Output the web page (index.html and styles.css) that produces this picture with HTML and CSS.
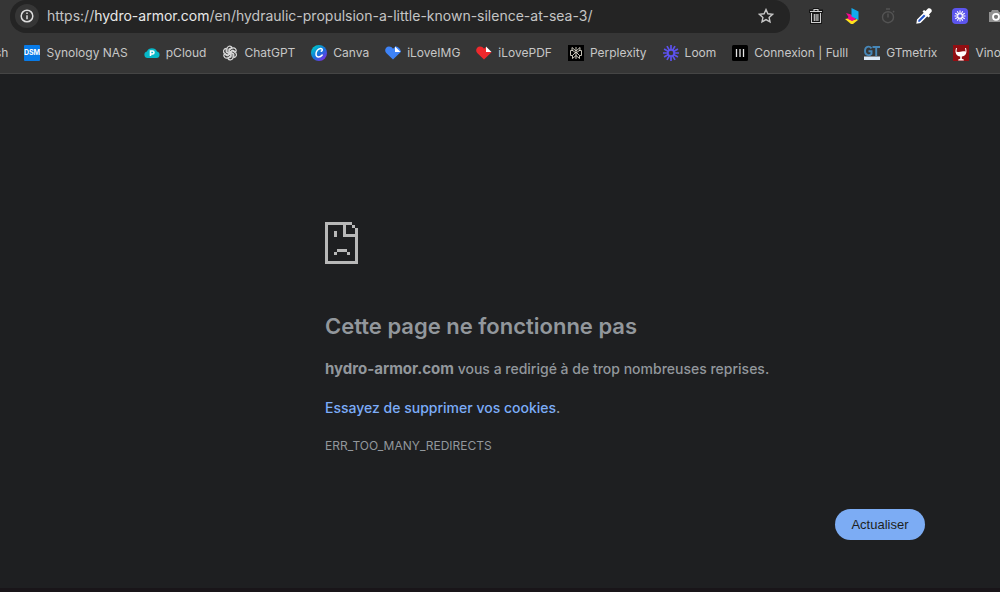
FILE: index.html
```html
<!DOCTYPE html>
<html lang="fr">
<head>
<meta charset="utf-8">
<meta name="viewport" content="width=device-width, initial-scale=1">
<title>hydro-armor.com</title>
<link rel="stylesheet" href="styles.css">
</head>
<body>
<header class="browser">
  <div class="toolbar">
    <div class="omnibox">
      <button class="site-info" aria-label="Informations sur le site">
        <svg width="14" height="14" viewBox="0 0 14 14" fill="none" stroke="#dedede" stroke-width="1.5"><circle cx="7" cy="7" r="5.800"/><path d="M7 6.200v4M7 3.500v1.500"/></svg>
      </button>
      <div class="url" role="textbox" aria-label="Adresse" tabindex="0">https://<span class="host">hydro-armor.com</span>/en/hydraulic-propulsion-a-little-known-silence-at-sea-3/</div>
      <button class="star" aria-label="Ajouter aux favoris">
        <svg width="16" height="16" viewBox="0 0 16 16" fill="none" stroke="#c7c7c7" stroke-width="1.4"><path d="M8 1.600l1.900 4.200 4.600.5-3.400 3.100.9 4.500L8 11.600l-4 2.300.9-4.500L1.500 6.300l4.600-.5z"/></svg>
      </button>
    </div>
    <div class="extensions">
      <button class="ext" aria-label="Corbeille"><svg width="16" height="16" viewBox="0 0 16 16"><path d="M5 0h6v1.500h4V5h-1v11H2V5H1V1.500h4z" fill="#141414"/><path d="M2 3.500h12M6 3V1.500h4V3M3.500 5v9.500h9V5M6.300 6v7M8.100 6v7M9.900 6v7" fill="none" stroke="#d0d0d0" stroke-width="1.100"/></svg></button>
      <button class="ext" aria-label="Couleurs"><svg width="16" height="16" viewBox="0 0 16 16"><path d="M1 11l3-.5 4 2 5-1.500 1 1-5 4H7z" fill="#ffe11c"/><path d="M2 5l5 1.500 5 4.500-4 2-5-2.500L4.500 9z" fill="#f5078c"/><path d="M7.500 0l7 3.500v8.500l-7-3.500z" fill="#12a9ee"/></svg></button>
      <button class="ext" aria-label="Minuteur"><svg width="16" height="16" viewBox="0 0 16 16" fill="none" stroke="#535353" stroke-width="1.400"><circle cx="8" cy="9.200" r="5.500"/><path d="M6 1h4M8 5.500v4M13 3l1.200 1.200"/></svg></button>
      <button class="ext" aria-label="Pipette"><svg width="16" height="16" viewBox="0 0 16 16"><path d="M1.200 14.800l.5-3L8 5.500 10.500 8l-6.300 6.300z" fill="#2455c8" stroke="#fff" stroke-width="1.500"/><path d="M6.500 3.500L8 2l1.500 1L12 .6c2-1.500 4.800 1.200 3.400 3.400L13 6.500 14 8l-1.500 1.500z" fill="#fff"/></svg></button>
      <button class="ext" aria-label="Loom"><svg width="16" height="16" viewBox="0 0 16 16"><rect width="16" height="16" rx="4" fill="#5c55ee"/><path d="M8 2.500v11M2.500 8h11M5.250 3.240l5.500 9.520M10.750 3.240l-5.500 9.520M3.240 5.250l9.520 5.500M12.760 5.250l-9.520 5.500" stroke="#fff" stroke-width="1.100"/><circle cx="8" cy="8" r="2.300" fill="#5c55ee" stroke="#fff"/></svg></button>
      <button class="ext" aria-label="Capture"><svg width="16" height="16" viewBox="0 0 16 16"><path d="M1 4h2l1-2h6l1 2h4v10H1z" fill="#919191"/><circle cx="8" cy="8.800" r="3" fill="#777" stroke="#fff" stroke-width="1.800"/></svg></button>
    </div>
  </div>
  <nav class="bookmarks" aria-label="Favoris">
    <a class="bookmark" href="#">sh</a>
    <a class="bookmark" href="#"><svg class="icon" viewBox="0 0 16 16"><rect width="16" height="16" rx="1" fill="#087be8"/><text class="dsm" x="8" y="10" text-anchor="middle">DSM</text></svg>Synology NAS</a>
    <a class="bookmark" href="#"><svg class="icon" viewBox="0 0 16 16"><path d="M3.500 13a3.300 3.300 0 0 1-.6-6.500A5.500 5.500 0 0 1 13 6.500 3.300 3.300 0 0 1 12.600 13z" fill="#07b8c8"/><path d="M6.500 11V6h2a1.500 1.500 0 0 1 0 3h-2" fill="none" stroke="#fff" stroke-width="1.600"/></svg>pCloud</a>
    <a class="bookmark" href="#"><svg class="icon" viewBox="0 0 16 16" fill="none" stroke="#dcdcdc" stroke-width="1.200"><path id="petal" d="M8 8.900L5 7.200V3.900a2.700 2.700 0 0 1 5-1.500L7 4.200v3"/><use href="#petal" transform="rotate(60 8 8)"/><use href="#petal" transform="rotate(120 8 8)"/><use href="#petal" transform="rotate(180 8 8)"/><use href="#petal" transform="rotate(240 8 8)"/><use href="#petal" transform="rotate(300 8 8)"/></svg>ChatGPT</a>
    <a class="bookmark" href="#"><svg class="icon" viewBox="0 0 16 16"><defs><linearGradient id="canva" x1=".1" y1=".2" x2=".8" y2="1"><stop stop-color="#00bfcb"/><stop offset=".5" stop-color="#176fdc"/><stop offset="1" stop-color="#842be7"/></linearGradient></defs><circle cx="8" cy="8" r="8" fill="url(#canva)"/><path d="M10.300 6.300c1.600-.6 1.300-3.100-.8-2.900-2.500.2-4.700 3.200-4.500 5.900.2 3.500 4 3.600 6.200.7" fill="none" stroke="#fff" stroke-width="1.500" stroke-linecap="round"/></svg>Canva</a>
    <a class="bookmark" href="#"><svg class="icon" viewBox="0 0 16 16"><path d="M8 14.500L1.200 8C-1 5.500.5 1.500 4 1.500c1.800 0 3 .9 4 2.200L10 2v5h5.800z" fill="#3e83f7"/><path d="M10 1.500c3 0 5.500 2 6 5.500h-6z" fill="#3e83f7"/><path d="M10 1.500l5.500 5.500H10z" fill="#fff"/></svg>iLoveIMG</a>
    <a class="bookmark" href="#"><svg class="icon" viewBox="0 0 16 16"><path d="M8 14.500L1.200 8C-1 5.500.5 1.500 4 1.500c1.800 0 3 .9 4 2.200L10 2v5h5.800z" fill="#ee292d"/><path d="M10 1.500l5.500 5.500H10z" fill="#fff"/></svg>iLovePDF</a>
    <a class="bookmark" href="#"><svg class="icon" viewBox="0 0 16 16"><rect width="16" height="16" fill="#000"/><path d="M8 2v12M4 2.500V5l4 3 4-3V2.500L8 6 4 2.500M5 5.500H2.500v5h2v3l3.500-3 3.500 3v-3h2v-5H11M4.500 10.500L8 7l3.500 3.500" fill="none" stroke="#d8d5c8" stroke-width=".9"/></svg>Perplexity</a>
    <a class="bookmark" href="#"><svg class="icon" viewBox="0 0 16 16"><path d="M8 0v16M0 8h16M4 1.070l8 13.860M12 1.070L4 14.930M1.070 4l13.860 8M14.930 4L1.070 12" stroke="#5c52ee" stroke-width="1.700"/><circle cx="8" cy="8" r="3.200" fill="#363636" stroke="#5c52ee" stroke-width="1.800"/></svg>Loom</a>
    <a class="bookmark" href="#"><svg class="icon" viewBox="0 0 16 16"><rect width="16" height="16" rx="1.500" fill="#000"/><path d="M4.500 4v8M8 4v8M11.500 4v8" stroke="#e5e5e5" stroke-width="1.300"/></svg>Connexion | Fulll</a>
    <a class="bookmark" href="#"><svg class="icon" viewBox="0 0 16 16"><path d="M0 11.500h16V15H0z" fill="#dce9f7"/><path d="M7.500 3.300C5 .3 1 1.700 1 5.900c0 4.600 4.500 5.200 6.500 3V6.300h-3M8.500 2H16M12.200 2v9" fill="none" stroke="#4787b8" stroke-width="1.900"/></svg>GTmetrix</a>
    <a class="bookmark" href="#"><svg class="icon" viewBox="0 0 16 16"><rect width="16" height="16" fill="#910e12"/><path d="M3 3c-1.500 5 .5 8 4.200 8.500v2.300l-2 .7v1h5.600v-1l-2-.7v-2.300C12.500 11 14.500 8 13 3h-1l.6 3.500C10 5.500 7 8 3.400 6.500L4 3z" fill="#fff"/></svg>Vinothèque</a>
  </nav>
</header>
<main class="error-page">
  <svg class="sad-page" width="33" height="42" viewBox="0 0 33 42" shape-rendering="crispEdges" fill="#b8b8b8" role="img" aria-label="Erreur"><path d="M0 0h27v3H3v36h27V15H18V3h3v9h9V6h3v36H0zM27 3h3v3h-3zM9 9h3v6H9zM24 12h3v3h-3zM12 27h10v3H12zM9 30h3v3H9zM22 30h3v3h-3z"/></svg>
  <h1 class="title">Cette page ne fonctionne pas</h1>
  <p class="message"><strong class="site">hydro-armor.com</strong> vous a redirigé à de trop nombreuses reprises.</p>
  <p class="message"><a class="link" href="#">Essayez de supprimer vos cookies</a>.</p>
  <p class="code">ERR_TOO_MANY_REDIRECTS</p>
  <button class="reload">Actualiser</button>
</main>
</body>
</html>
```
FILE: styles.css
```css
* { box-sizing: border-box; }
body {
  margin: 0;
  min-height: 100vh;
  display: flex;
  flex-direction: column;
  overflow-x: hidden;
  background: #1e1f21;
  color: #92979c;
  font-family: Inter, "Liberation Sans", sans-serif;
}
button {
  border: 0;
  padding: 0;
  background: none;
  font: inherit;
  display: grid;
  place-items: center;
}
p, h1 { margin: 0; }
.browser {
  background: #363636;
  border-bottom: 1px solid #454545;
  overflow: hidden;
}
.toolbar {
  display: flex;
  gap: 18px;
  padding-left: 10px;
}
.omnibox {
  flex: 1;
  min-width: 0;
  display: flex;
  align-items: center;
  height: 33px;
  padding: 0 16px 1px 5px;
  border-radius: 16px;
  background: #242424;
}
.site-info {
  width: 24px;
  height: 24px;
  border-radius: 50%;
  background: #363636;
}
.url {
  flex: 1;
  min-width: 0;
  margin-left: 8px;
  overflow: hidden;
  white-space: nowrap;
  font-size: 14px;
  line-height: 20px;
  color: #c5c5c5;
}
.host { color: #e8e8e8; }
.extensions {
  flex: none;
  display: flex;
  align-items: center;
  gap: 20px;
  margin-right: -4px;
  padding-bottom: 1px;
}
.bookmarks {
  display: flex;
  align-items: center;
  gap: 16px;
  height: 40px;
  margin-left: -5px;
}
.bookmark {
  flex: none;
  display: flex;
  align-items: center;
  gap: 6px;
  font-size: 12px;
  line-height: 16px;
  color: #c7c7c7;
  text-decoration: none;
}
.icon { width: 16px; height: 16px; }
.dsm {
  fill: #fff;
  font: bold 7px Inter, sans-serif;
}
.error-page {
  flex: 1;
  display: flex;
  flex-direction: column;
  align-items: flex-start;
  padding: 148px 7.5% 48px 32.5%;
  border-bottom: 4px solid #191519;
}
.title {
  margin-top: 48px;
  font-size: 22px;
  font-weight: 600;
  line-height: 28px;
}
.message {
  margin-top: 15px;
  font-size: 14px;
  font-weight: 500;
  line-height: 24px;
}
.title + .message { margin-top: 17px; }
.site {
  font-size: 15px;
  font-weight: 700;
}
.link {
  color: #7cacf8;
  text-decoration: none;
}
.code {
  margin-top: 16px;
  font-size: 12px;
  line-height: 20px;
}
.reload {
  align-self: flex-end;
  margin-top: 53px;
  min-width: 90px;
  padding: 0 16px;
  height: 31px;
  border-radius: 16px;
  background: #7cacf4;
  color: #1e1f21;
  font: 13px/20px "Liberation Sans", sans-serif;
}
```
